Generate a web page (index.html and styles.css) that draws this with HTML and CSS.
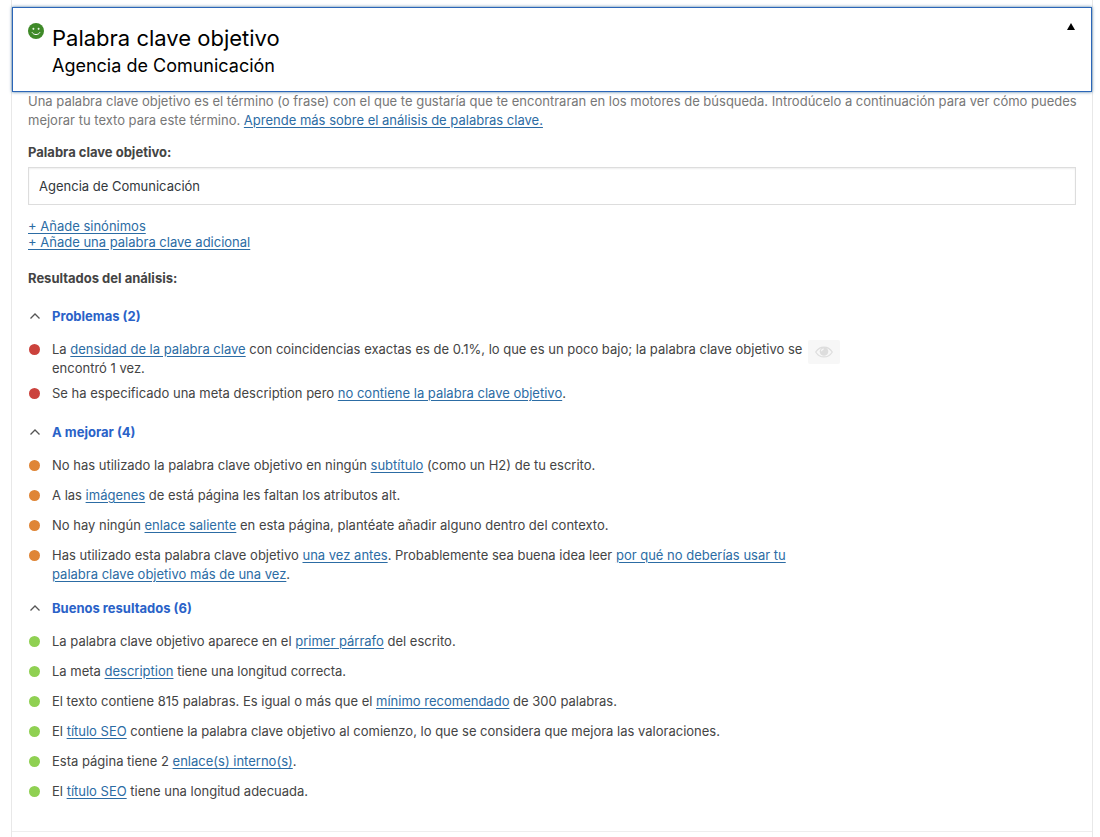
FILE: index.html
```html
<!DOCTYPE html>
<html lang="es">
<head>
    <meta charset="UTF-8">
    <meta name="viewport" content="width=device-width, initial-scale=1.0">
    <title>Palabra clave objetivo</title>
    <link rel="stylesheet" href="styles.css">
</head>
<body>
    <main class="metabox">
        <button type="button" class="metabox-header" aria-expanded="true">
            <svg class="smiley" viewBox="0 0 16 16" aria-hidden="true">
                <circle cx="8" cy="8" r="8" fill="#3f8a28"/>
                <path d="M5.4 4.800v2M4.400 5.800h2M10.600 4.800v2M9.600 5.800h2" stroke="#e8f5e2" stroke-width="1"/>
                <path d="M4.200 9.600c1.300 2.700 6.300 2.700 7.600 0" fill="none" stroke="#fff" stroke-width="1" stroke-linecap="round"/>
            </svg>
            <span class="header-text">
                <span class="header-title">Palabra clave objetivo</span>
                <span class="header-subtitle">Agencia de Comunicación</span>
            </span>
            <svg class="toggle" viewBox="0 0 8 7" aria-hidden="true"><path d="M4 0l4 7H0z"/></svg>
        </button>

        <div class="metabox-content">
            <p class="help">Una palabra clave objetivo es el término (o frase) con el que te gustaría que te encontraran en los motores de búsqueda. Introdúcelo a continuación para ver cómo puedes mejorar tu texto para este término. <a href="#">Aprende más sobre el análisis de palabras clave.</a></p>

            <label class="label" for="keyword">Palabra clave objetivo:</label>
            <input class="keyword" type="text" id="keyword" value="Agencia de Comunicación">

            <div class="add-links">
                <a href="#">+ Añade sinónimos</a>
                <a href="#">+ Añade una palabra clave adicional</a>
            </div>

            <h2 class="label">Resultados del análisis:</h2>

            <section>
                <h3><button type="button" class="group-title" aria-expanded="true">
                    <svg class="chevron" viewBox="0 0 14 14" aria-hidden="true"><path d="M2.500 9.500L7 5l4.500 4.500"/></svg>
                    Problemas (2)
                </button></h3>
                <ul class="results bad">
                    <li>
                        <p>La <a href="#">densidad de la palabra clave</a> con coincidencias exactas es de 0.1%, lo que es un poco bajo; la palabra clave objetivo se encontró 1 vez.</p>
                        <button type="button" class="mark" aria-label="Resaltar este resultado en el texto" disabled>
                            <svg viewBox="0 0 18 12" aria-hidden="true">
                                <path d="M.7 6C4.800-.6 13.200-.6 17.300 6 13.200 12.600 4.800 12.600.7 6z" fill="none" stroke="#ddd" stroke-width="1.200"/>
                                <circle cx="9" cy="5.500" r="4.300" fill="#ddd"/>
                                <path d="M6.600 5.200c0-1.300.9-2.200 2.200-2.200" fill="none" stroke="#f7f7f7" stroke-width="1.200"/>
                            </svg>
                        </button>
                    </li>
                    <li><p>Se ha especificado una meta description pero <a href="#">no contiene la palabra clave objetivo</a>.</p></li>
                </ul>
            </section>

            <section>
                <h3><button type="button" class="group-title" aria-expanded="true">
                    <svg class="chevron" viewBox="0 0 14 14" aria-hidden="true"><path d="M2.500 9.500L7 5l4.500 4.500"/></svg>
                    A mejorar (4)
                </button></h3>
                <ul class="results ok">
                    <li><p>No has utilizado la palabra clave objetivo en ningún <a href="#">subtítulo</a> (como un H2) de tu escrito.</p></li>
                    <li><p>A las <a href="#">imágenes</a> de está página les faltan los atributos alt.</p></li>
                    <li><p>No hay ningún <a href="#">enlace saliente</a> en esta página, plantéate añadir alguno dentro del contexto.</p></li>
                    <li><p>Has utilizado esta palabra clave objetivo <a href="#">una vez antes</a>. Probablemente sea buena idea leer <a href="#">por qué no deberías usar tu palabra clave objetivo más de una vez</a>.</p></li>
                </ul>
            </section>

            <section>
                <h3><button type="button" class="group-title" aria-expanded="true">
                    <svg class="chevron" viewBox="0 0 14 14" aria-hidden="true"><path d="M2.500 9.500L7 5l4.500 4.500"/></svg>
                    Buenos resultados (6)
                </button></h3>
                <ul class="results good">
                    <li><p>La palabra clave objetivo aparece en el <a href="#">primer párrafo</a> del escrito.</p></li>
                    <li><p>La meta <a href="#">description</a> tiene una longitud correcta.</p></li>
                    <li><p>El texto contiene 815 palabras. Es igual o más que el <a href="#">mínimo recomendado</a> de 300 palabras.</p></li>
                    <li><p>El <a href="#">título SEO</a> contiene la palabra clave objetivo al comienzo, lo que se considera que mejora las valoraciones.</p></li>
                    <li><p>Esta página tiene 2 <a href="#">enlace(s) interno(s)</a>.</p></li>
                    <li><p>El <a href="#">título SEO</a> tiene una longitud adecuada.</p></li>
                </ul>
            </section>
        </div>
    </main>
</body>
</html>
```
FILE: styles.css
```css
* {
    box-sizing: border-box;
}
body {
    margin: 0;
    background-color: #fff;
    color: #444;
    font-family: Inter, "Liberation Sans", sans-serif;
    font-size: 13px;
    line-height: 19px;
}
h2, h3, p, ul {
    margin: 0;
    padding: 0;
}
a {
    color: #2c6ca4;
    text-underline-offset: 2px;
}
button {
    font-family: inherit;
    text-align: left;
    cursor: pointer;
}
.metabox {
    min-height: 100vh;
    margin: 0 7px 0 11px;
    padding-top: 7px;
    border: 1px solid #e8e8e8;
    border-width: 0 1px;
}
.metabox-header {
    display: flex;
    align-items: flex-start;
    width: 100%;
    padding: 15px 16px 13px 15px;
    background-color: #fff;
    border: 1px solid #2b66b8;
    box-shadow: 0 0 3px rgba(30, 90, 140, 0.8);
    color: #000;
}
.smiley {
    width: 16px;
    height: 16px;
    margin-right: 8px;
}
.header-text {
    flex: 1;
}
.header-title, .header-subtitle {
    display: block;
}
.header-title {
    font-size: 22px;
    line-height: 30px;
}
.header-subtitle {
    font-size: 18px;
    line-height: 25px;
}
.toggle {
    width: 8px;
    height: 7px;
}
.metabox-content {
    padding: 0 16px 25px;
    border-bottom: 1px solid #eee;
}
.help {
    margin: 0 -12px 13px 0;
    color: #777;
}
.label {
    display: block;
    font-size: 13px;
    line-height: 19px;
    font-weight: 700;
}
.keyword {
    display: block;
    width: 100%;
    height: 38px;
    margin: 5px 0 13px;
    padding: 0 10px;
    border: 1px solid #ddd;
    box-shadow: inset 0 1px 2px rgba(0, 0, 0, 0.07);
    background-color: #fff;
    color: #32373c;
    font-family: inherit;
    font-size: 13px;
}
.add-links {
    display: flex;
    flex-direction: column;
    align-items: flex-start;
    margin-bottom: 19px;
    line-height: 16px;
}
h2.label {
    margin-bottom: 4px;
}
.group-title {
    display: flex;
    align-items: center;
    gap: 10px;
    height: 48px;
    padding: 0;
    background: none;
    border: none;
    color: #2a62c8;
    font-size: 13px;
    font-weight: 700;
}
.chevron {
    width: 14px;
    height: 14px;
    fill: none;
    stroke: #555;
    stroke-width: 1.3;
}
.results {
    display: flex;
    flex-direction: column;
    gap: 6px;
    max-width: 812px;
    list-style: none;
}
.results li {
    display: flex;
    align-items: flex-start;
    min-height: 24px;
}
.results li::before {
    content: "";
    flex: none;
    width: 11px;
    height: 11px;
    margin: 4px 12px 0 1px;
    border-radius: 50%;
}
.bad li::before {
    background-color: #cb423c;
}
.ok li::before {
    background-color: #df8536;
}
.good li::before {
    background-color: #8fd052;
}
.results p {
    flex: 0 1 752px;
}
.mark {
    display: flex;
    align-items: center;
    justify-content: center;
    flex: none;
    width: 32px;
    height: 24px;
    margin-left: 4px;
    padding: 0;
    background-color: #f7f7f7;
    border: none;
    border-radius: 2px;
}
.mark svg {
    width: 18px;
    height: 12px;
}
```
